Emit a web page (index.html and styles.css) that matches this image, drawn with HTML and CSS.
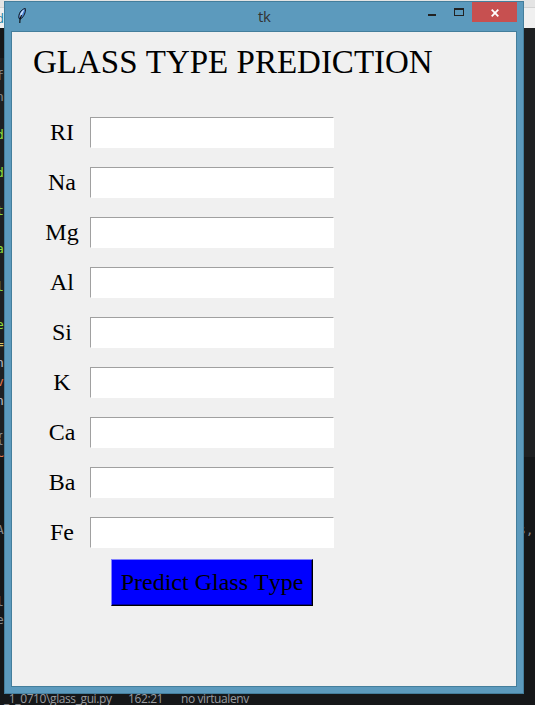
FILE: index.html
```html
<!DOCTYPE html>
<html lang="en">
<head>
<meta charset="utf-8">
<title>tk</title>
<link rel="stylesheet" href="styles.css">
</head>
<body>
<div class="desktop">
  <div class="editor-top"></div>
  <div class="editor-tab">d</div>
  <div class="panel panel-right"></div>
  <div class="panel panel-left"></div>
  <span class="code gray" style="top:67px">f</span>
  <span class="code gray" style="top:88px">n</span>
  <span class="code green" style="top:126px">d</span>
  <span class="code green" style="top:164px">d</span>
  <span class="code green" style="top:202px">t</span>
  <span class="code green" style="top:240px">a</span>
  <span class="code green" style="top:278px">l</span>
  <span class="code green" style="top:316px">e</span>
  <span class="code yellow" style="top:335px">=</span>
  <span class="code white" style="top:354px">n</span>
  <span class="code orange" style="top:373px">v</span>
  <span class="code white" style="top:392px">n</span>
  <span class="code gray" style="top:430px">{</span>
  <span class="code orange" style="top:447px">~</span>
  <span class="code gray" style="top:521px">A</span>
  <span class="code gray" style="top:593px">l</span>
  <span class="code gray" style="top:611px">e</span>
  <span class="code gray tail">s,</span>
  <div class="statusbar"><span class="file">_1_0710\glass_gui.py</span><span class="pos">162:21</span><span>no virtualenv</span></div>

  <div class="window">
    <header class="titlebar">
      <svg class="feather" width="12" height="18" viewBox="0 0 12 18">
        <path d="M2 11.500C1 7.500 4 2 8.300 1.500C9 5 7 9.500 3.700 12Z" fill="#4a86d8" stroke="#10151d" stroke-width="1"/>
        <path d="M2.800 10C2.600 7 5 3.500 7.300 2.500L5 7.500L3.500 10.500Z" fill="#cfe2fa"/>
        <path d="M4.500 8L3 12L2.800 16" fill="none" stroke="#0a0a0a" stroke-width="1.1"/>
      </svg>
      <span class="title">tk</span>
      <div class="controls">
        <svg width="44" height="20" viewBox="0 0 44 20" shape-rendering="crispEdges">
          <path d="M0 12h8v2H0z" fill="#222"/>
          <path d="M26 6h10v8H26zM27 8v5h8V8z" fill="#222" fill-rule="evenodd"/>
        </svg>
        <div class="close"><svg width="8" height="8" viewBox="0 0 8 8"><path d="M.7.7L7.3 7.3M7.3.7L.7 7.3" stroke="#fff" stroke-width="1.8"/></svg></div>
      </div>
    </header>
    <main class="client">
      <h1>GLASS TYPE PREDICTION</h1>
      <form class="form">
        <label><span>RI</span><input type="text"></label>
        <label><span>Na</span><input type="text"></label>
        <label><span>Mg</span><input type="text"></label>
        <label><span>Al</span><input type="text"></label>
        <label><span>Si</span><input type="text"></label>
        <label><span>K</span><input type="text"></label>
        <label><span>Ca</span><input type="text"></label>
        <label><span>Ba</span><input type="text"></label>
        <label><span>Fe</span><input type="text"></label>
        <button type="button">Predict Glass Type</button>
      </form>
    </main>
  </div>
</div>
</body>
</html>
```
FILE: styles.css
```css
* { box-sizing: border-box; }
body { margin: 0; }
.desktop {
  position: relative;
  width: 535px;
  height: 705px;
  overflow: hidden;
  background: #151719;
}
.editor-top {
  position: absolute;
  inset: 0 0 auto;
  height: 28px;
  background: linear-gradient(#e4e4e4 7px, #d2d2d2 7px, #d2d2d2 8px, #f0f0f0 8px);
}
.editor-tab {
  position: absolute;
  left: -4px;
  top: 8px;
  height: 20px;
  font: 13px/20px "Open Sans", sans-serif;
  color: #1680a5;
}
.panel { position: absolute; background: #1e2022; }
.panel-right { left: 524px; top: 28px; width: 11px; height: 429px; }
.panel-left { left: 0; top: 58px; width: 4px; height: 399px; }
.code {
  position: absolute;
  left: -4px;
  font: 13px/18px "DejaVu Sans Mono", monospace;
}
.gray { color: #85878b; }
.white { color: #b9bcc4; }
.green { color: #8bdb3b; }
.yellow { color: #d8c568; }
.orange { color: #e07a4c; }
.tail { left: 518px; top: 521px; }
.statusbar {
  position: absolute;
  left: 0;
  right: 0;
  bottom: -3px;
  height: 19px;
  display: flex;
  font: 12px/19px "Open Sans", sans-serif;
  letter-spacing: -.4px;
  color: #9a9ca0;
  white-space: pre;
}
.statusbar .file { width: 128px; padding-left: 4px; }
.statusbar .pos { width: 53px; }
.window {
  position: absolute;
  left: 4px;
  top: 1px;
  width: 520px;
  height: 693px;
  border: 1px solid #447e9c;
  background: #5c9abd;
  padding: 0 6px;
}
.titlebar {
  display: flex;
  align-items: flex-start;
  height: 29px;
}
.feather { margin: 5px 0 0 6px; }
.title {
  width: 20px;
  margin-left: 229px;
  font: 15px/28px "Open Sans", sans-serif;
  letter-spacing: -.4px;
  color: #333;
}
.controls { display: flex; margin-left: 150px; }
.close {
  display: flex;
  align-items: center;
  justify-content: center;
  width: 45px;
  height: 20px;
  padding-top: 1px;
  background: #c75050;
}
.client {
  width: 506px;
  height: 656px;
  padding: 10px 0 0 21px;
  border: 1px solid #447e9c;
  background: #f0f0f0;
  font-family: "Liberation Serif", serif;
  color: #000;
}
h1 {
  height: 70px;
  margin: 0;
  font-size: 33px;
  font-weight: 400;
  line-height: 40px;
  font-kerning: none;
  white-space: nowrap;
}
.form { font-size: 24px; padding-top: 5px; }
label {
  display: flex;
  height: 31px;
  margin-bottom: 19px;
}
label span {
  width: 57px;
  padding-left: 1px;
  line-height: 30px;
  text-align: center;
}
input {
  width: 244px;
  height: 31px;
  padding: 0 2px;
  border: 1px solid #fff;
  border-top-color: #a0a0a0;
  border-left-color: #a0a0a0;
  background: #fff;
  font: inherit;
}
button {
  display: block;
  width: 202px;
  height: 47px;
  margin: -8px 0 0 78px;
  padding: 0;
  border: 1px solid #000;
  border-top-color: #8080ff;
  border-left-color: #8080ff;
  border-radius: 0;
  box-shadow: inset -1px -1px #0000a0;
  background: #00f;
  font: 24px/45px "Liberation Serif", serif;
  font-kerning: none;
  color: #000;
}
```
